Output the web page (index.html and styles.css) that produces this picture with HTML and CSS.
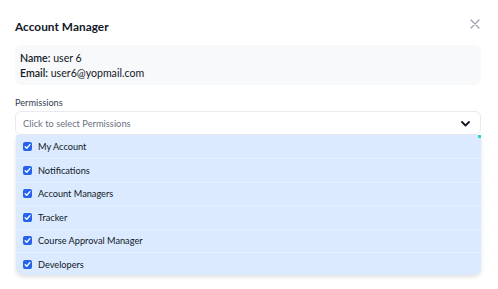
FILE: index.html
```html
<!DOCTYPE html>
<html>
<head>
<meta charset="utf-8">
<link rel="stylesheet" href="styles.css">
</head>
<body>
<div class="modal">
  <div class="header">
    <h1 class="title">Account Manager</h1>
    <button class="close" aria-label="Close">
      <svg width="10" height="10" viewBox="0 0 10 10"><path d="M1 1L9 9M9 1L1 9" stroke="#9ca3af" stroke-width="1.3" stroke-linecap="round"/></svg>
    </button>
  </div>
  <div class="info">
    <div><b>Name:</b> user 6</div>
    <div><b>Email:</b> user6@yopmail.com</div>
  </div>
  <div class="label">Permissions</div>
  <div class="select">
    <span class="placeholder">Click to select Permissions</span>
    <svg class="chev" width="9" height="6" viewBox="0 0 9 6"><path d="M1 1L4.5 4.5L8 1" fill="none" stroke="#111827" stroke-width="1.8" stroke-linecap="round" stroke-linejoin="round"/></svg>
  </div>
  <div class="menu">
    <span class="corner"></span>
    <div class="opt"><span class="cb"><svg width="9" height="9" viewBox="0 0 9 9"><path d="M2.2 4.7L3.8 6.3L6.9 2.6" fill="none" stroke="#fff" stroke-width="1.4" stroke-linecap="round" stroke-linejoin="round"/></svg></span>My Account</div>
    <div class="opt"><span class="cb"><svg width="9" height="9" viewBox="0 0 9 9"><path d="M2.2 4.7L3.8 6.3L6.9 2.6" fill="none" stroke="#fff" stroke-width="1.4" stroke-linecap="round" stroke-linejoin="round"/></svg></span>Notifications</div>
    <div class="opt"><span class="cb"><svg width="9" height="9" viewBox="0 0 9 9"><path d="M2.2 4.7L3.8 6.3L6.9 2.6" fill="none" stroke="#fff" stroke-width="1.4" stroke-linecap="round" stroke-linejoin="round"/></svg></span>Account Managers</div>
    <div class="opt"><span class="cb"><svg width="9" height="9" viewBox="0 0 9 9"><path d="M2.2 4.7L3.8 6.3L6.9 2.6" fill="none" stroke="#fff" stroke-width="1.4" stroke-linecap="round" stroke-linejoin="round"/></svg></span>Tracker</div>
    <div class="opt"><span class="cb"><svg width="9" height="9" viewBox="0 0 9 9"><path d="M2.2 4.7L3.8 6.3L6.9 2.6" fill="none" stroke="#fff" stroke-width="1.4" stroke-linecap="round" stroke-linejoin="round"/></svg></span>Course Approval Manager</div>
    <div class="opt"><span class="cb"><svg width="9" height="9" viewBox="0 0 9 9"><path d="M2.2 4.7L3.8 6.3L6.9 2.6" fill="none" stroke="#fff" stroke-width="1.4" stroke-linecap="round" stroke-linejoin="round"/></svg></span>Developers</div>
  </div>
</div>
</body>
</html>
```
FILE: styles.css
```css
* { box-sizing: border-box; }
html, body { margin: 0; padding: 0; background: #fff; }
body { font-family: "Lato", "Open Sans", sans-serif; color: #1f2937; }
.modal { width: 498px; height: 289px; padding: 16px 17px 0 15px; }
.header { display: flex; justify-content: space-between; align-items: center; height: 20px; }
.title { margin: 0; font-size: 11.8px; font-weight: 700; color: #111827; letter-spacing: 0.05px; }
.close { border: 0; background: none; padding: 0; width: 12px; height: 12px; display: flex; align-items: center; justify-content: center; margin-top: -4px; }
.info { margin-top: 9px; background: #f8f9fa; border-radius: 6px; height: 40px; padding: 6px 5px 4px; font-size: 10.6px; line-height: 15px; color: #111827; }
.info b { font-weight: 600; }
.label { margin-top: 11px; font-size: 9.2px; color: #374151; line-height: 14px; }
.select { margin-top: 1px; height: 24px; border: 1px solid #e8eaed; border-radius: 6px; display: flex; align-items: center; justify-content: space-between; padding: 0 10px 0 7px; }
.placeholder { font-size: 9.3px; color: #6b7280; }
.chev { margin-top: 1px; }
.menu { position: relative; margin-left: 1px; background: #dbeafe; border-radius: 0 0 7px 7px; box-shadow: 0 2px 4px rgba(0,0,0,0.12); }
.corner { position: absolute; right: 0; top: 0; width: 3px; height: 3px; background: #2dd4bf; }
.opt { height: 23.4px; display: flex; align-items: center; padding-left: 7px; font-size: 9.2px; color: #111827; border-top: 1px solid #e6efff; }
.opt:first-of-type { border-top: 0; }
.cb { width: 9px; height: 9px; background: #2563eb; border-radius: 2px; margin-right: 6px; display: flex; }
```
